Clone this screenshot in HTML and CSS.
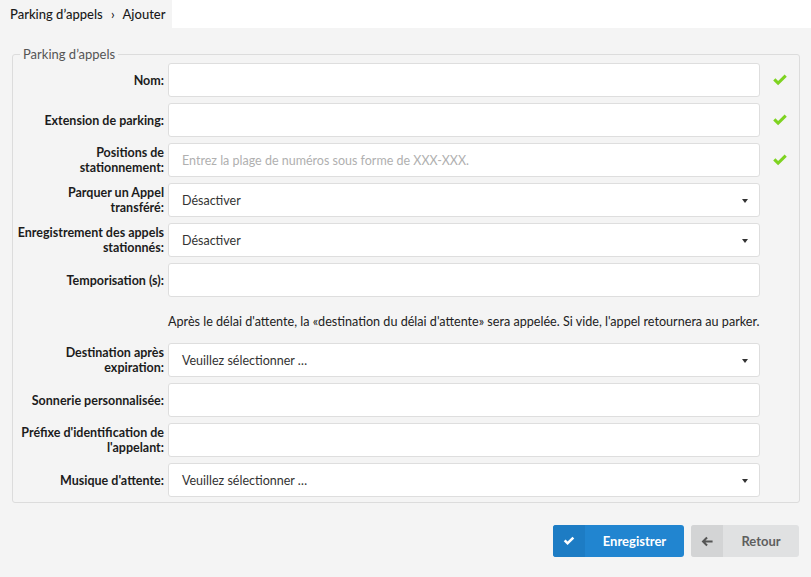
FILE: index.html
```html
<!DOCTYPE html>
<html lang="fr">
<head>
<meta charset="utf-8">
<link rel="stylesheet" href="styles.css">
</head>
<body>
<div class="tabs">
  <div class="tab">Parking d’appels <span class="sep">›</span> Ajouter</div>
</div>
<div class="content">
  <fieldset class="box">
    <legend>Parking d’appels</legend>
    <div class="grid">
      <label class="lbl">Nom:</label>
      <div class="input"></div>
      <div class="ok"><svg viewBox="0 0 16 12" width="16" height="12"><path d="M1.2 6.4 L3.4 4.3 L6.1 7 L12.6 0.6 L14.8 2.7 L6.1 11.3 Z" fill="#7ed321"/></svg></div>

      <label class="lbl">Extension de parking:</label>
      <div class="input"></div>
      <div class="ok"><svg viewBox="0 0 16 12" width="16" height="12"><path d="M1.2 6.4 L3.4 4.3 L6.1 7 L12.6 0.6 L14.8 2.7 L6.1 11.3 Z" fill="#7ed321"/></svg></div>

      <label class="lbl">Positions de<br>stationnement:</label>
      <div class="input placeholder">Entrez la plage de numéros sous forme de XXX-XXX.</div>
      <div class="ok"><svg viewBox="0 0 16 12" width="16" height="12"><path d="M1.2 6.4 L3.4 4.3 L6.1 7 L12.6 0.6 L14.8 2.7 L6.1 11.3 Z" fill="#7ed321"/></svg></div>

      <label class="lbl">Parquer un Appel<br>transféré:</label>
      <div class="input select">Désactiver<span class="caret"></span></div>
      <div></div>

      <label class="lbl">Enregistrement des appels<br>stationnés:</label>
      <div class="input select">Désactiver<span class="caret"></span></div>
      <div></div>

      <label class="lbl">Temporisation (s):</label>
      <div class="input"></div>
      <div></div>

      <div></div>
      <div class="help">Après le délai d'attente, la «destination du délai d'attente» sera appelée. Si vide, l'appel retournera au parker.</div>
      <div></div>

      <label class="lbl">Destination après<br>expiration:</label>
      <div class="input select">Veuillez sélectionner …<span class="caret"></span></div>
      <div></div>

      <label class="lbl">Sonnerie personnalisée:</label>
      <div class="input"></div>
      <div></div>

      <label class="lbl">Préfixe d'identification de<br>l'appelant:</label>
      <div class="input"></div>
      <div></div>

      <label class="lbl">Musique d'attente:</label>
      <div class="input select">Veuillez sélectionner …<span class="caret"></span></div>
      <div></div>
    </div>
  </fieldset>
  <div class="actions">
    <button class="btn primary"><span class="ico"><svg viewBox="0 0 16 12" width="12" height="10"><path d="M1 6.2 L3.4 3.9 L6.1 6.6 L12.6 0.2 L15 2.5 L6.1 11.3 Z" fill="#fff"/></svg></span><span class="txt">Enregistrer</span></button>
    <button class="btn secondary"><span class="ico"><svg viewBox="0 0 14 12" width="12" height="11"><path d="M6.2 0.5 L7.9 2.2 L5.2 4.8 L13.5 4.8 L13.5 7.2 L5.2 7.2 L7.9 9.8 L6.2 11.5 L0.7 6 Z" fill="#555"/></svg></span><span class="txt">Retour</span></button>
  </div>
</div>
</body>
</html>
```

FILE: styles.css
```css
html, body {
  margin: 0;
  padding: 0;
  background: #ffffff;
  font-family: Lato, "Open Sans", Arial, sans-serif;
  color: #222;
}

.tabs {
  height: 28px;
  display: flex;
}

.tab {
  width: 162px;
  padding-left: 10px;
  background: #f4f4f4;
  font-size: 13px;
  font-weight: 500;
  line-height: 28px;
  color: #1a1a1a;
}

.tab .sep {
  margin: 0 5px 0 5px;
}

.content {
  background: #f4f4f4;
  height: 549px;
  padding: 19px 12px 0 12px;
  box-sizing: border-box;
}

.box {
  margin: 0;
  padding: 0 0 5px 0;
  border: 1px solid #dcdcdc;
  border-radius: 3px;
}

.box legend {
  margin-left: 7px;
  padding: 0 3px;
  font-size: 13px;
  color: #555;
  line-height: 14px;
}

.grid {
  display: grid;
  grid-template-columns: 155px 1fr 39px;
  grid-auto-rows: 34px;
  row-gap: 6px;
  padding-top: 2px;
}

.lbl {
  display: flex;
  align-items: center;
  justify-content: flex-end;
  text-align: right;
  padding-right: 4px;
  font-size: 12.5px;
  font-weight: 700;
  line-height: 15px;
  color: #1c1c1c;
}

.input {
  background: #fff;
  border: 1px solid #dedede;
  border-radius: 3px;
  display: flex;
  align-items: center;
  padding-left: 13px;
  font-size: 12.5px;
  color: #333;
  position: relative;
}

.placeholder {
  color: #b0b0b0;
}

.caret {
  position: absolute;
  right: 11px;
  top: 15px;
  width: 0;
  height: 0;
  border-left: 3.5px solid transparent;
  border-right: 3.5px solid transparent;
  border-top: 4px solid #333;
}

.ok {
  display: flex;
  align-items: center;
  justify-content: center;
  padding-left: 1px;
}

.help {
  display: flex;
  align-items: center;
  font-size: 12.6px;
  color: #222;
  white-space: nowrap;
  padding-top: 3px;
}

.actions {
  display: flex;
  justify-content: flex-end;
  gap: 7px;
  margin-top: 22px;
}

.btn {
  display: flex;
  align-items: stretch;
  height: 32px;
  padding: 0;
  border: 0;
  border-radius: 3px;
  overflow: hidden;
  font-family: Lato, "Open Sans", Arial, sans-serif;
  font-size: 13px;
  font-weight: 700;
  cursor: pointer;
}

.btn .ico {
  width: 32px;
  display: flex;
  align-items: center;
  justify-content: center;
}

.btn .txt {
  flex: 1;
  display: flex;
  align-items: center;
  justify-content: center;
}

.primary {
  width: 131px;
  background: #2185d0;
  color: #fff;
}

.primary .ico {
  background: #1d7cc4;
}

.secondary {
  width: 108px;
  background: #e0e1e2;
  color: #5f5f5f;
}

.secondary .ico {
  background: #d3d4d5;
}
```
